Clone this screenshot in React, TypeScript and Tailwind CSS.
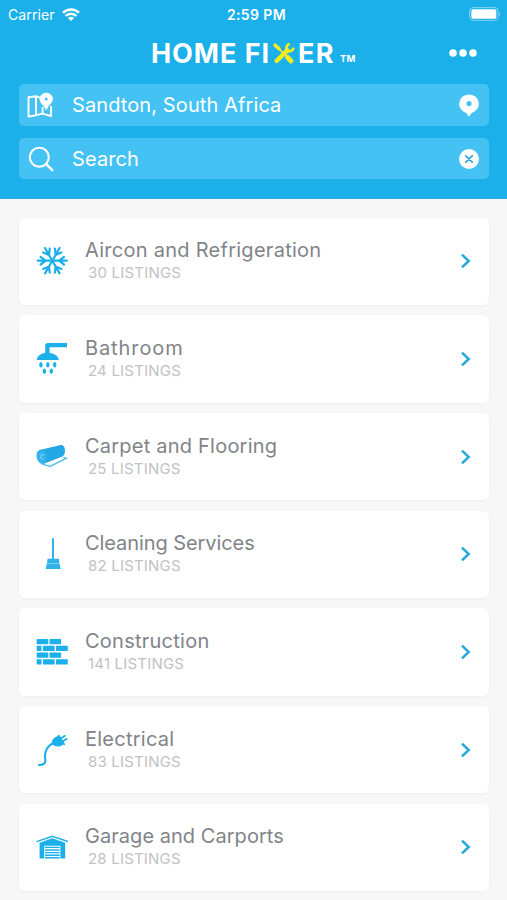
import type { ReactNode } from 'react'

const BLUE = '#1bb0ea'

function Snowflake() {
  return (
    <svg className="w-8 h-8" viewBox="0 0 32 32" fill="none" stroke={BLUE} strokeWidth={2.2} strokeLinecap="round">
      {[0, 60, 120, 180, 240, 300].map((deg) => (
        <g key={deg} transform={`rotate(${deg} 16.3 15.7)`}>
          <path d="M16.3 15.7H30.9M23 15.7l5-3.8M23 15.7l5 3.8" />
        </g>
      ))}
    </svg>
  )
}

function Shower() {
  return (
    <svg className="w-8 h-8" viewBox="0 0 32 32" fill={BLUE}>
      <path d="M9.2 10V2.6Q9.2 0 11.8 0H31v4.3H13.6V10C18.9 10.6 22.4 13.4 22.8 16.9H.8c.4-3.5 3.6-6.3 8.4-6.9z" />
      {[[4.9, 21.8], [11.8, 21.8], [18.7, 21.8], [8.4, 28.2], [15.3, 28.2]].map(([x, y]) => (
        <ellipse key={`${x}-${y}`} cx={x} cy={y} rx={1.7} ry={2.8} />
      ))}
    </svg>
  )
}

function Carpet() {
  return (
    <svg className="w-8 h-8" viewBox="0 0 32 32" fill="none">
      <path d="M5.5 22.8l8.6 2.6 16.6-8.2-3.4-.8" stroke="#4bbdf0" strokeWidth={1.3} strokeLinejoin="round" />
      <path d="M4.8 8.7l19.8-4.6c3-.3 4.4 2.3 4.4 5.7 0 3-1 5.2-3.2 6L7.3 22.9z" fill="#22a9e4" />
      <ellipse cx="5.5" cy="15.8" rx="4.9" ry="7.3" transform="rotate(-12 5.5 15.8)" fill="#34b3ec" />
      <path d="M7.4 17.5c-1.4 1.6-3-.2-2.6-2.4.4-2 2.2-2.2 2.8-.6" stroke="#a9def7" strokeWidth={0.8} />
    </svg>
  )
}

function Broom() {
  return (
    <svg className="w-8 h-8" viewBox="0 0 32 32" fill="#2eb3ea">
      <path d="M16 .6q1-1.2 2 0V21h-2z" />
      <path d="M11.6 20.8h11.3l.5 4.4H11z" />
      <path d="M10.9 25.5h12.6l1.3 5.6H9.6z" />
    </svg>
  )
}

function Bricks() {
  const wide = [[0.7, 11.6], [13.5, 11.6]]
  const offset = [[0.7, 4.8], [6.9, 11.8], [20, 11.8]]
  return (
    <svg className="w-8 h-8" viewBox="0 0 32 32" fill={BLUE}>
      {[wide, offset, wide, offset].map((row, r) =>
        row.map(([x, w]) => <rect key={`${r}-${x}`} x={x} y={3.1 + r * 6.7} width={w} height={5.2} rx={0.6} />)
      )}
    </svg>
  )
}

function Plug() {
  return (
    <svg className="w-8 h-8" viewBox="0 0 32 32" fill="none" stroke={BLUE} strokeLinecap="round">
      <path d="M3 31c5.4-.1 6.8-1.8 6.2-6-1-7 .6-12.6 9.2-16.5" strokeWidth={2.1} />
      <path d="M15.6 10c0-5 3.8-7.8 7.6-8.2l5 7.8c-2.9 3.6-8.4 4-12.6.4z" fill={BLUE} stroke="none" />
      <path d="M22.8 1.8l5.4 8.4" strokeWidth={1.8} />
      <path d="M25.6 4l3.4-2.2M27.2 7l3.6-2.2" strokeWidth={1.7} />
    </svg>
  )
}

function Garage() {
  return (
    <svg className="w-8 h-8" viewBox="0 0 32 32">
      <path d="M.6 10.6L16.3 5.2 32 10.6" fill="none" stroke={BLUE} strokeWidth={1.5} />
      <path d="M3.6 11.7L16.3 7.2l12.9 4.5v15.8h-4.8V14.8H8.2v12.7H3.6z" fill={BLUE} />
      <path d="M9 16.4h14.6M9 19h14.6M9 21.6h14.6M9 24.2h14.6M9 26.8h14.6" stroke={BLUE} strokeWidth={1.4} />
    </svg>
  )
}

function Tools() {
  return (
    <svg className="w-[22px] h-[21px] shrink-0" viewBox="0 0 22 21" fill="none" stroke="#f8ec1c" strokeLinecap="round">
      <path d="M2.2 2.2l3.8 3.6" strokeWidth={3.6} />
      <path d="M2 2l12 11.6" strokeWidth={1.7} />
      <path d="M14.6 14.4l3.4 3.6" strokeWidth={4.8} />
      <path d="M3.6 17.8L14.4 7.4" strokeWidth={4.4} />
      <path d="M15.7 1.3c-1.8 1-2.7 2.9-2 4.7.5 1.6 2.2 2.6 3.8 2.2 1.4-.3 2.4-1.2 2.8-2.5" strokeWidth={2.7} />
    </svg>
  )
}

interface Category {
  name: string
  count: number
  icon: ReactNode
  tracking: string
}

const categories: Category[] = [
  { name: 'Aircon and Refrigeration', count: 30, icon: <Snowflake />, tracking: 'tracking-[0.27px]' },
  { name: 'Bathroom', count: 24, icon: <Shower />, tracking: 'tracking-[0.9px]' },
  { name: 'Carpet and Flooring', count: 25, icon: <Carpet />, tracking: 'tracking-[0.22px]' },
  { name: 'Cleaning Services', count: 82, icon: <Broom />, tracking: 'tracking-[-0.08px]' },
  { name: 'Construction', count: 141, icon: <Bricks />, tracking: 'tracking-[0.25px]' },
  { name: 'Electrical', count: 83, icon: <Plug />, tracking: 'tracking-[0.25px]' },
  { name: 'Garage and Carports', count: 28, icon: <Garage />, tracking: 'tracking-[0.04px]' },
]

function StatusBar() {
  return (
    <div className="grid grid-cols-3 items-center h-7 pl-2 pr-[6px] text-[14px]">
      <div className="flex items-center gap-[7px]">
        <span className="tracking-[0.1px]">Carrier</span>
        <svg className="w-[18px] h-[13px]" viewBox="0 0 18 13" fill="none" stroke="white" strokeWidth={2.5}>
          <path d="M1 4.7c4.6-4.3 11.4-4.3 16 0M3.6 7.9c3.1-2.9 7.7-2.9 10.8 0" />
          <path d="M5.9 10c1.8-1.6 4.4-1.6 6.2 0L9 12.9z" fill="white" stroke="none" />
        </svg>
      </div>
      <span className="text-center font-semibold tracking-[0.4px] pl-1">2:59 PM</span>
      <svg className="justify-self-end w-8 h-[14px]" viewBox="0 0 32 14">
        <rect x="0.6" y="0.6" width="28.4" height="12.8" rx="3.4" fill="none" stroke="white" strokeOpacity={0.45} />
        <rect x="2.3" y="2.3" width="25" height="9.4" rx="1.8" fill="white" />
        <path d="M30 4.8q2 2.2 0 4.4z" fill="white" fillOpacity={0.5} />
      </svg>
    </div>
  )
}

export default function App() {
  return (
    <div className="w-[507px] h-[900px] overflow-hidden bg-[#f7f7f7] font-['Inter',sans-serif]">

      {/* Header */}
      <header className="h-[198.5px] bg-[#1bb0ea] text-white border-b border-[#38a9dc]">
        <StatusBar />

        <div className="flex items-center justify-between h-[50px] mb-[6px] pl-[151px] pr-[30px]">
          <h1 className="flex items-center text-[27px] font-bold leading-none">
            <span className="w-[122px] whitespace-nowrap tracking-[0.95px]">HOME FI</span>
            <Tools />
            <span className="ml-[3px] w-[42px] tracking-[1.4px]">ER</span>
            <span className="mt-[11px] text-[9.5px] tracking-[0.2px]">TM</span>
          </h1>
          <svg className="w-7 h-2" viewBox="0 0 28 8" fill="white">
            <circle cx="4" cy="4" r="3.8" />
            <circle cx="14" cy="4" r="3.8" />
            <circle cx="24" cy="4" r="3.8" />
          </svg>
        </div>

        <div className="flex flex-col gap-3 pl-[19px] pr-[18px] text-[20px]">
          <div className="flex items-center h-[41.7px] rounded-[5px] bg-[#45c2f4] px-2">
            <svg className="w-7 h-7" viewBox="0 0 28 28" fill="none" stroke="white" strokeWidth={1.9} strokeLinejoin="round">
              <path d="M13.5 6.8L9 5.2 1.5 6.2V25.6l7.5-1.4V5.2M9 24.2l6.5-1.6 8.6 2.4V15M15.6 22.8V16" />
              <path fillRule="evenodd" d="M19.2 2.2c-3.7 0-6.2 2.7-6.2 5.8 0 4 4.4 6.2 6.2 10.6 1.8-4.4 6.2-6.6 6.2-10.6 0-3.1-2.5-5.8-6.2-5.8zm0 3.9a2 2 0 110 4 2 2 0 010-4z" fill="white" stroke="white" strokeWidth={1} />
            </svg>
            <span className="ml-[17px] flex-1 tracking-[0.1px]">Sandton, South Africa</span>
            <svg className="w-6 h-6" viewBox="0 0 24 24" fill="white">
              <path fillRule="evenodd" d="M12 1.4a9.7 9.4 0 00-9.8 9.4c0 5.6 4.3 8.2 7.2 9.2L12 23.8l2.6-3.8c2.9-1 7.2-3.6 7.2-9.2A9.7 9.4 0 0012 1.4zm0 6.6a2.6 2.6 0 110 5.2 2.6 2.6 0 010-5.2z" />
            </svg>
          </div>

          <div className="flex items-center h-[41.7px] rounded-[5px] bg-[#45c2f4] px-2">
            <svg className="w-7 h-7" viewBox="0 0 28 28" fill="none" stroke="white" strokeWidth={2.1} strokeLinecap="round">
              <circle cx="12.3" cy="12.3" r="9.5" />
              <path d="M19.2 19.2l6 6" strokeWidth={2.6} />
            </svg>
            <span className="ml-[17px] flex-1 tracking-[0.1px]">Search</span>
            <svg className="w-6 h-6" viewBox="0 0 24 24">
              <circle cx="12" cy="12" r="10" fill="white" />
              <path d="M8.8 8.8l6.4 6.4M15.2 8.8l-6.4 6.4" stroke="#3aa9da" strokeWidth={1.9} strokeLinecap="round" />
            </svg>
          </div>
        </div>
      </header>

      {/* Listings */}
      <main className="flex flex-col gap-[10.2px] pl-[19px] pr-[18px] pt-[19px]">
        {categories.map((c) => (
          <div key={c.name} className="flex items-center shrink-0 h-[87.5px] pl-[17px] pr-[17px] bg-white rounded-md shadow-[0_1px_3px_rgba(0,0,0,0.04)]">
            {c.icon}
            <div className="ml-[17px] flex-1">
              <p className={`text-[20px] leading-6 text-[#818489] ${c.tracking}`}>{c.name}</p>
              <p className="pl-[3px] text-[15px] leading-[22px] tracking-[0.2px] text-[#c0c2c6]">{c.count} LISTINGS</p>
            </div>
            <svg className="w-3 h-4" viewBox="0 0 12 16" fill="none" stroke="#28a8dc" strokeWidth={2.5}>
              <path d="M2 1.7l6.7 6.3L2 14.3" />
            </svg>
          </div>
        ))}
      </main>
    </div>
  )
}
